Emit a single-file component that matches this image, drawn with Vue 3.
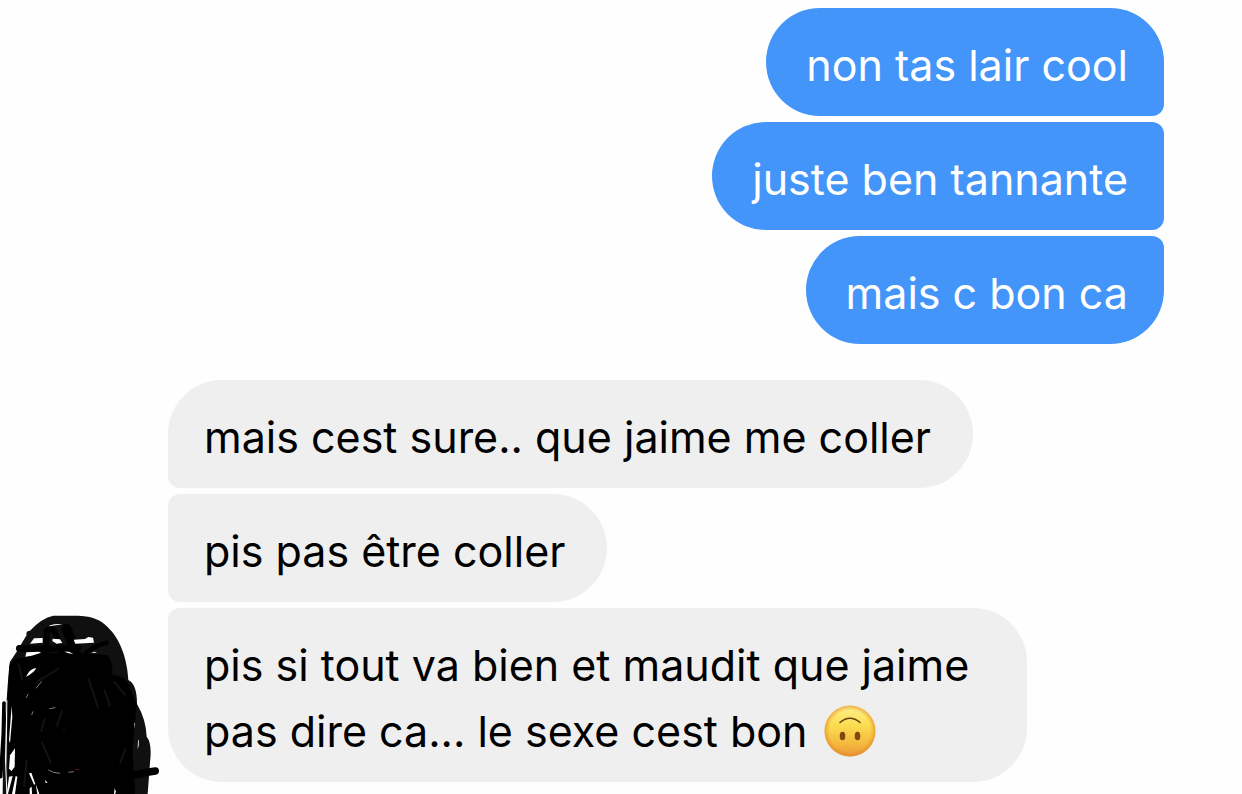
<script setup>
const sent = ['non tas lair cool', 'juste ben tannante', 'mais c bon ca']
const received = [
  { text: 'mais cest sure.. que jaime me coller' },
  { text: 'pis pas être coller' },
  { text: 'pis si tout va bien et maudit que jaime pas dire ca... le sexe cest bon', emoji: true },
]
</script>

<template>
  <main class="thread">
    <section class="group sent" aria-label="Sent messages">
      <p v-for="message in sent" :key="message" class="bubble">{{ message }}</p>
    </section>

    <section class="incoming" aria-label="Received messages">
      <svg class="avatar" viewBox="0 36 504 546" aria-hidden="true">
        <path
          fill="#101010"
          d="M30 185 L50 155 L62 135 L80 105 Q76 93 90 92 Q125 54 160 47 H235 Q272 48 296 61 C345 88 381 155 385 240 Q411 252 411 312 Q438 358 440 410 Q457 430 450 488 L443 582 H8 L10 400 L20 300 L23 256 L28 195 Z"
        />
        <path
          fill="#000"
          d="M28 200 Q36 172 78 172 L125 158 L220 160 L322 165 Q340 185 337 225 Q384 230 388 260 L410 312 L398 450 L405 582 H25 L22 300 Z"
        />
        <g fill="none" stroke="#000" stroke-linecap="round">
          <path stroke-width="20" d="M58 145 Q150 150 235 141" />
          <path stroke-width="18" d="M138 165 L140 92 Q155 80 166 100 L188 165" />
          <path stroke-width="30" d="M199 86 L228 160" />
          <path stroke-width="14" d="M250 165 Q285 135 320 128" />
          <path stroke-width="22" d="M340 545 Q410 520 466 513" />
        </g>
        <g fill="#fff">
          <path d="M102 115 L128 114 V128 L90 131 Z" />
          <path d="M158 116 L180 118 L187 129 L170 131 L157 123 Z" />
          <path d="M221 119 L255 117 L265 111 L279 113 L282 128 L226 131 Z" />
          <path d="M79 157 L117 155 L123 158 L95 167 L76 170 Z" />
          <path d="M193 155 L207 155 L220 162 L206 160 Z" />
          <path d="M272 159 L284 155 L291 158 Z" />
          <path d="M81 225 Q89 207 109 204 Q103 218 78 230 Z" />
          <path d="M150 76 Q170 70 188 73 L147 79 Z" />
          <path d="M19 302 L22 300 L21 400 L19 500 L22 582 H19 L15 480 Z" />
          <path d="M35 318 L37 350 L30 430 L27 420 Z" />
          <path d="M30 466 L45 445 L44 500 L34 514 L27 505 Z" />
          <path d="M27 530 L38 528 L24 582 H20 Z" />
          <path d="M47 528 L52 530 L45 582 H36 Z" />
          <path d="M87 520 L94 518 L106 552 L102 554 Z" />
          <path d="M89 565 L95 560 L96 582 H89 Z" />
          <path d="M107 553 L113 568 L118 582 H112 Z" />
          <path d="M135 540 L143 548 L137 549 Z" />
          <path d="M402 370 L404 368 L404 386 Z" />
          <path d="M414 421 L416 419 L416 437 L413 448 Z" />
          <path d="M344 565 L348 575 L345 582 H342 Z" />
        </g>
        <path fill="none" stroke="#000" stroke-width="11" stroke-linecap="round" d="M12 309 L10 400 L2 530" />
        <path fill="none" stroke="#bbb" stroke-width="2" d="M85 282 L78 294 M108 265 L125 244 M95 345 L99 334 M145 510 Q158 519 180 520 M205 517 L222 515 M148 326 L166 323" />
        <g fill="none" stroke="#121212" stroke-width="6">
          <path d="M55 190 L67 240 M112 245 Q155 218 178 205 M123 395 L135 355 M265 235 L295 325 M313 268 L330 320 M342 245 L377 287 M125 425 L153 490 M187 330 L170 380 M360 490 L377 445 M80 480 L72 560" />
        </g>
        <path stroke="#552016" stroke-width="3" d="M226 509 h12 M190 390 h4" />
      </svg>

      <div class="group received">
        <p v-for="message in received" :key="message.text" class="bubble">
          {{ message.text }}
          <svg v-if="message.emoji" class="emoji" viewBox="0 0 52 52" role="img" aria-label="Upside-down face">
            <defs>
              <linearGradient id="face" x1="0" y1="0" x2="0" y2="1">
                <stop offset="0" stop-color="#fff18c" />
                <stop offset="0.4" stop-color="#fbdc50" />
                <stop offset="0.75" stop-color="#f5b83f" />
                <stop offset="1" stop-color="#e99a38" />
              </linearGradient>
              <radialGradient id="rim">
                <stop offset="0.8" stop-color="#e58a20" stop-opacity="0" />
                <stop offset="1" stop-color="#dc8428" stop-opacity="0.6" />
              </radialGradient>
            </defs>
            <circle cx="26" cy="26" r="25.500" fill="url(#face)" />
            <circle cx="26" cy="26" r="25.500" fill="url(#rim)" />
            <path d="M16 17.500 Q26 9 36 17.500" fill="none" stroke="#65400c" stroke-width="1.6" stroke-linecap="round" />
            <ellipse cx="18.500" cy="31" rx="2.800" ry="4.300" fill="#7c4a10" />
            <ellipse cx="33.500" cy="31" rx="2.800" ry="4.300" fill="#7c4a10" />
          </svg>
        </p>
      </div>
    </section>
  </main>
</template>

<style>
body {
  margin: 0;
  background: #fefefe;
}
</style>

<style scoped>
.thread {
  display: flex;
  flex-direction: column;
  gap: 36px;
  padding-top: 8px;
  font-family: Inter, "Liberation Sans", sans-serif;
  font-size: 43px;
  line-height: 66px;
}

.group {
  display: flex;
  flex-direction: column;
  gap: 6px;
}

.bubble {
  max-width: 80%;
  box-sizing: border-box;
  margin: 0;
  padding: 24px 36px 18px;
}

.sent {
  align-items: flex-end;
  padding-right: 78px;
}

.sent .bubble {
  padding-left: 40px;
  background: #4395f9;
  color: #fff;
  border-radius: 54px 12px 12px 54px;
}

.sent .bubble:first-child {
  border-top-right-radius: 54px;
}

.sent .bubble:last-child {
  border-bottom-right-radius: 54px;
}

.incoming {
  display: flex;
  align-items: flex-end;
}

.avatar {
  flex: none;
  width: 168px;
  height: 182px;
}

.received {
  flex: 1;
  min-width: 0;
  align-items: flex-start;
  padding-bottom: 12px;
}

.received .bubble {
  padding-right: 42px;
  background: #efefef;
  color: #000;
  border-radius: 12px 54px 54px 12px;
}

.received .bubble:first-child {
  border-top-left-radius: 54px;
}

.received .bubble:last-child {
  border-bottom-left-radius: 54px;
}

.emoji {
  width: 52px;
  height: 52px;
  margin-left: 4px;
  vertical-align: -10px;
}
</style>
